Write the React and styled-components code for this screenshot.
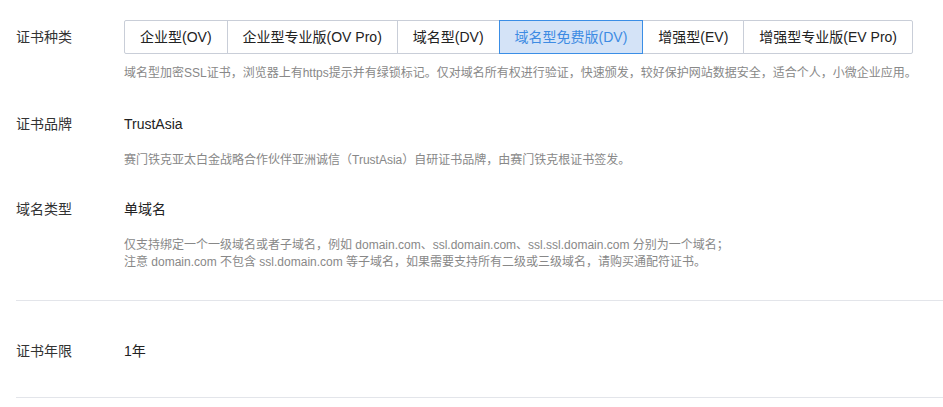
import React from "react";
import styled, { createGlobalStyle } from "styled-components";

const GlobalStyle = createGlobalStyle`
  html, body { margin: 0; padding: 0; background: #fff; }
  body {
    font-family: "Liberation Sans", "Noto Sans CJK SC", sans-serif;
    color: #222;
    -webkit-font-smoothing: antialiased;
  }
`;

const Page = styled.div`
  padding: 20px 0 0 16px;
  width: 927px;
`;

const Row = styled.div`
  display: grid;
  grid-template-columns: 108px 1fr;
  margin-top: ${(p) => p.$gap || 0}px;
`;

const Label = styled.div`
  font-size: 14px;
  color: #333;
  line-height: ${(p) => p.$lh || 20}px;
`;

const Content = styled.div`
  display: flex;
  flex-direction: column;
  align-items: flex-start;
`;

const Value = styled.div`
  font-size: 14px;
  line-height: 20px;
  color: #222;
`;

const Desc = styled.div`
  font-size: 12px;
  color: #888;
  line-height: ${(p) => p.$lh || 20}px;
  margin-top: ${(p) => p.$mt || 0}px;
  white-space: nowrap;
`;

const Group = styled.div`
  display: flex;
`;

const Option = styled.button`
  position: relative;
  height: 34px;
  padding: 0 15px;
  margin-left: -1px;
  font-family: inherit;
  font-size: 14px;
  line-height: 32px;
  white-space: nowrap;
  cursor: pointer;
  border: 1px solid ${(p) => (p.$active ? "#3a8ee6" : "#c9ced8")};
  background: ${(p) => (p.$active ? "#d4e3f7" : "#fff")};
  color: ${(p) => (p.$active ? "#3d8be3" : "#222")};
  z-index: ${(p) => (p.$active ? 1 : 0)};
  border-radius: 0;
  &:first-child {
    margin-left: 0;
    border-radius: 2px 0 0 2px;
  }
  &:last-child {
    border-radius: 0 2px 2px 0;
  }
`;

const Divider = styled.div`
  height: 1px;
  background: #e3e5ea;
  margin-top: ${(p) => p.$mt || 0}px;
  margin-right: -16px;
`;

const PlainRow = styled(Row)`
  padding: 40px 0 36px;
`;

const options = [
  "企业型(OV)",
  "企业型专业版(OV Pro)",
  "域名型(DV)",
  "域名型免费版(DV)",
  "增强型(EV)",
  "增强型专业版(EV Pro)",
];

export default function App() {
  return (
    <>
      <GlobalStyle />
      <Page>
        <Row>
          <Label $lh={34}>证书种类</Label>
          <Content>
            <Group>
              {options.map((o) => (
                <Option key={o} $active={o === "域名型免费版(DV)"}>
                  {o}
                </Option>
              ))}
            </Group>
            <Desc $mt={9}>
              域名型加密SSL证书，浏览器上有https提示并有绿锁标记。仅对域名所有权进行验证，快速颁发，较好保护网站数据安全，适合个人，小微企业应用。
            </Desc>
          </Content>
        </Row>

        <Row $gap={31}>
          <Label>证书品牌</Label>
          <Content>
            <Value>TrustAsia</Value>
            <Desc $mt={16}>
              赛门铁克亚太白金战略合作伙伴亚洲诚信（TrustAsia）自研证书品牌，由赛门铁克根证书签发。
            </Desc>
          </Content>
        </Row>

        <Row $gap={29}>
          <Label>域名类型</Label>
          <Content>
            <Value>单域名</Value>
            <Desc $mt={18} $lh={17}>
              仅支持绑定一个一级域名或者子域名，例如 domain.com、ssl.domain.com、ssl.ssl.domain.com 分别为一个域名；
              <br />
              注意 domain.com 不包含 ssl.domain.com 等子域名，如果需要支持所有二级或三级域名，请购买通配符证书。
            </Desc>
          </Content>
        </Row>

        <Divider $mt={29} />

        <PlainRow>
          <Label>证书年限</Label>
          <Content>
            <Value>1年</Value>
          </Content>
        </PlainRow>

        <Divider />
      </Page>
    </>
  );
}
